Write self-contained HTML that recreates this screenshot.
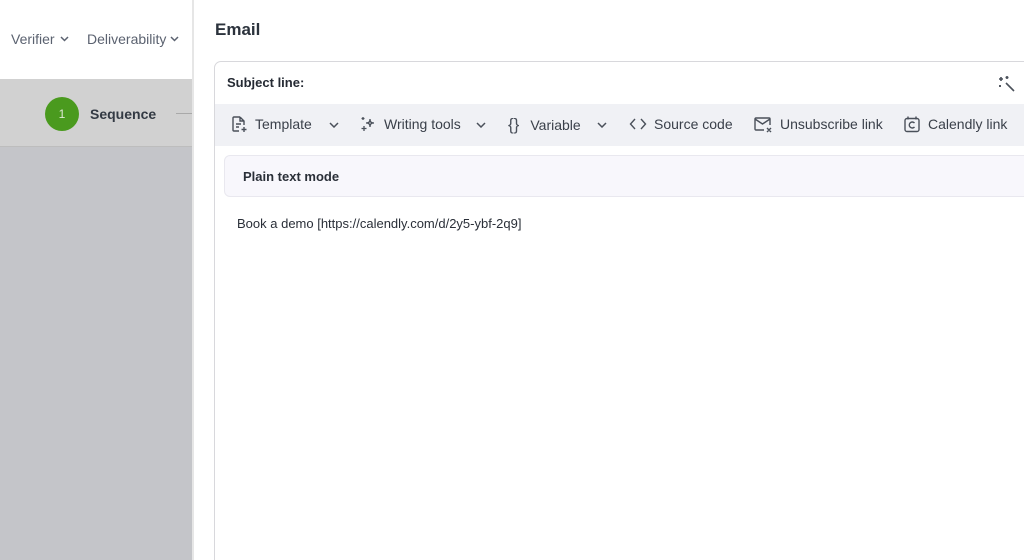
<!DOCTYPE html>
<html><head><style>
*{margin:0;padding:0;box-sizing:border-box}
html,body{width:1024px;height:560px;overflow:hidden}
body{font-family:"Liberation Sans",Arial,sans-serif;position:relative;background:#fff}
.left{position:absolute;left:0;top:0;width:192px;height:560px;background:#c4c5c9}
.top{position:absolute;left:0;top:0;width:192px;height:79px;background:#fff}
.band{position:absolute;left:0;top:79px;width:192px;height:68px;background:#d1d1d1;border-bottom:1px solid #bdbdbd}
.nav{position:absolute;top:31px;font-size:14px;color:#5b6270}
.circle{position:absolute;left:45px;top:97px;width:34px;height:34px;border-radius:50%;background:#4a9a1e;color:#dfe8d6;font-size:12px;text-align:center;line-height:34px}
.seq{position:absolute;left:90px;top:106px;font-size:14px;font-weight:bold;color:#333a44}
.line{position:absolute;left:176px;top:113px;width:16px;height:1px;background:#a9a9a9}
.sep{position:absolute;left:192px;top:0;width:2px;height:560px;background:#e6e6e6}
.title{position:absolute;left:215px;top:20px;font-size:17px;font-weight:bold;color:#2c333d}
.card{position:absolute;left:214px;top:61px;width:830px;height:520px;border:1px solid #d8d8dc;border-radius:7px;background:#fff;overflow:hidden}
.subj{position:absolute;left:12px;top:13px;font-size:13px;font-weight:bold;color:#252a33}
.tb{position:absolute;left:0;top:42px;width:100%;height:42px;background:#f0f1f5}
.ti{position:absolute;top:11px;font-size:14px;color:#3a404a;display:flex;align-items:center}
.ti svg{margin-right:7px}
.ch{position:absolute}
.plain{position:absolute;left:9px;top:93px;width:820px;height:42px;background:#f8f7fc;border:1px solid #e9e8ef;border-radius:6px}
.plain span{position:absolute;left:18px;top:13px;font-size:13px;font-weight:bold;color:#2a2f38}
.body{position:absolute;left:22px;top:154px;font-size:13px;color:#2a2f38}
</style></head><body>
<div class="left"></div><div class="top"></div><div class="band"></div>
<div class="nav" style="left:11px">Verifier</div>
<svg class="ch" style="left:60px;top:36px" width="9" height="6" viewBox="0 0 9 6" fill="none" stroke="#5b6270" stroke-width="1.5"><path d="M1 1l3.5 3.5L8 1"/></svg>
<div class="nav" style="left:87px">Deliverability</div>
<svg class="ch" style="left:170px;top:36px" width="9" height="6" viewBox="0 0 9 6" fill="none" stroke="#5b6270" stroke-width="1.5"><path d="M1 1l3.5 3.5L8 1"/></svg>
<div class="circle">1</div><div class="seq">Sequence</div><div class="line"></div>
<div class="sep"></div>
<div class="title">Email</div>
<div class="card">
<div class="subj">Subject line:</div>
<svg style="position:absolute;left:782px;top:12px" width="20" height="20" viewBox="0 0 20 20" fill="none" stroke="#4a505a" stroke-width="1.6"><path d="M9 9l8 8"/><path d="M4 3v4M2 5h4M10 2v3M8.5 3.5h3M3 11v2M2 12h2"/></svg>
<div class="tb">
<div class="ti" style="left:15px"><svg width="18" height="18" viewBox="0 0 18 18" fill="none" stroke="#4a505a" stroke-width="1.4"><path d="M10 2H4a1 1 0 0 0-1 1v12a1 1 0 0 0 1 1h5M10 2l4 4v4M10 2v4h4M6 9h5M6 12h3M14 12v5M11.5 14.5h5"/></svg>Template</div>
<svg class="ch" style="left:114px;top:18px" width="10" height="6" viewBox="0 0 10 6" fill="none" stroke="#4a505a" stroke-width="1.5"><path d="M1 1l4 4 4-4"/></svg>
<div class="ti" style="left:144px"><svg width="18" height="18" viewBox="0 0 18 18" fill="none" stroke="#4a505a" stroke-width="1.3"><path d="M11 4c0 3 1 4 4 4-3 0-4 1-4 4 0-3-1-4-4-4 3 0 4-1 4-4zM5 11v5M2.5 13.5h5M4 2v3M2.5 3.5h3"/></svg>Writing tools</div>
<svg class="ch" style="left:261px;top:18px" width="10" height="6" viewBox="0 0 10 6" fill="none" stroke="#4a505a" stroke-width="1.5"><path d="M1 1l4 4 4-4"/></svg>
<div class="ti" style="left:293px"><span style="font-size:17px;margin-right:11px;color:#4a505a">{}</span>Variable</div>
<svg class="ch" style="left:382px;top:18px" width="10" height="6" viewBox="0 0 10 6" fill="none" stroke="#4a505a" stroke-width="1.5"><path d="M1 1l4 4 4-4"/></svg>
<div class="ti" style="left:414px"><svg width="18" height="18" viewBox="0 0 18 18" fill="none" stroke="#4a505a" stroke-width="1.4"><path d="M6 4L1.5 9 6 14M12 4l4.5 5L12 14"/></svg>Source code</div>
<div class="ti" style="left:538px"><svg width="20" height="18" viewBox="0 0 20 18" fill="none" stroke="#4a505a" stroke-width="1.4"><path d="M11 15H3a1 1 0 0 1-1-1V4a1 1 0 0 1 1-1h13a1 1 0 0 1 1 1v6M2 4l7.5 5L17 4M14 13l4 4M18 13l-4 4"/></svg>Unsubscribe link</div>
<div class="ti" style="left:688px"><svg width="18" height="18" viewBox="0 0 18 18" fill="none" stroke="#4a505a" stroke-width="1.4"><rect x="2" y="3.5" width="14" height="13" rx="2"/><path d="M5 1.5v3M13 1.5v3M11.5 8a3 3 0 1 0 0 4"/></svg>Calendly link</div>
</div>
<div class="plain"><span>Plain text mode</span></div>
<div class="body">Book a demo [https://calendly.com/d/2y5-ybf-2q9]</div>
</div>
</body></html>
